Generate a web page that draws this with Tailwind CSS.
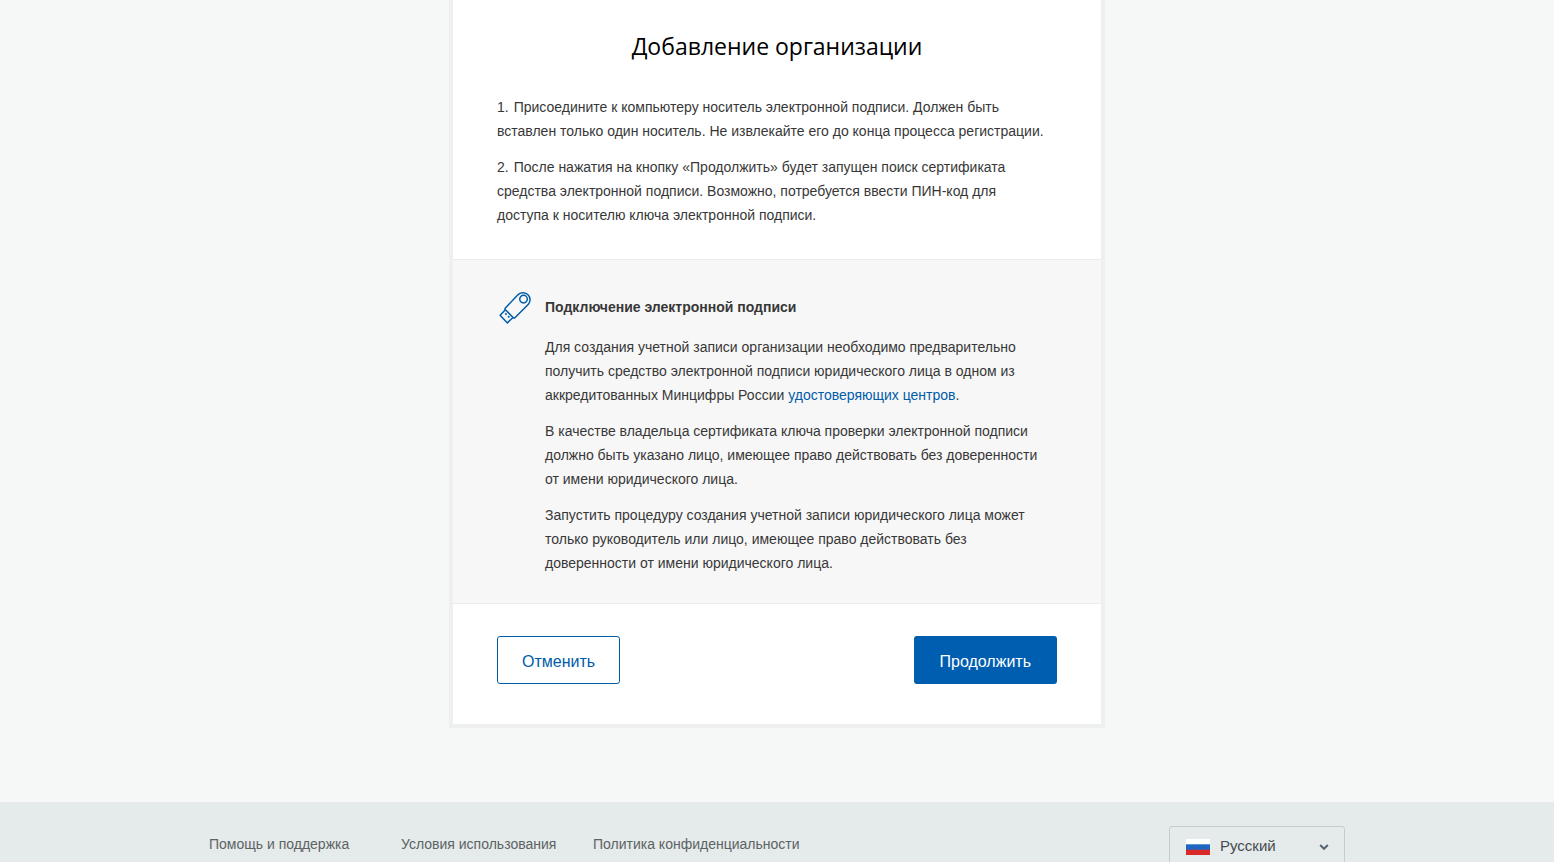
<!DOCTYPE html>
<html lang="ru">
<head>
    <meta charset="UTF-8">
    <meta name="viewport" content="width=device-width, initial-scale=1.0">
    <title>Добавление организации</title>
    <script src="https://cdn.jsdelivr.net/npm/@tailwindcss/browser@4"></script>
</head>
<body class="bg-[#f6f8f8] font-['Liberation_Sans',Arial,sans-serif] text-sm leading-6 text-[#373737]">
    <div class="flex h-screen flex-col overflow-hidden">
        <main class="mx-auto w-full max-w-[656px] shrink-0 border-4 border-t-0 border-[#eeefef] bg-white">
            <section class="px-11 pt-[26px] pb-8">
                <h1 class="mb-[29px] text-center font-['Open_Sans',sans-serif] text-[23px] leading-10 font-medium text-black">Добавление организации</h1>
                <div class="space-y-3">
                    <p><span class="mr-[5px]">1.</span>Присоедините к компьютеру носитель электронной подписи. Должен быть<br>
                        вставлен только один носитель. Не извлекайте его до конца процесса регистрации.</p>
                    <p><span class="mr-[5px]">2.</span>После нажатия на кнопку «Продолжить» будет запущен поиск сертификата<br>
                        средства электронной подписи. Возможно, потребуется ввести ПИН-код для<br>
                        доступа к носителю ключа электронной подписи.</p>
                </div>
            </section>

            <section class="flex border-y border-[#ebebeb] bg-[#f7f7f7] px-11 pt-7 pb-7">
                <svg class="mt-0.5 mr-3 h-9 w-9 shrink-0" viewBox="0 0 36 36" fill="none" stroke="#005ca9" stroke-width="1.5" stroke-linejoin="round" aria-hidden="true">
                    <path d="M8.4 18 21.4 4.3A7.1 7.1 0 0 1 31.4 14.3L17.9 27.7Q17.1 28.4 16.3 27.7L8.4 19.8Q7.6 18.9 8.4 18Z"/>
                    <circle cx="26.5" cy="9.1" r="3.8"/>
                    <path d="M8.4 19.8 3.1 25.3 10.4 32.9 16 27.5"/>
                    <path d="M8.3 23.4 9.6 24.7M11.1 26.2 12.4 27.5" stroke-width="1.7"/>
                </svg>
                <div class="space-y-3">
                    <h2 class="mt-[7px] mb-4 font-bold">Подключение электронной подписи</h2>
                    <p>Для создания учетной записи организации необходимо предварительно<br>
                        получить средство электронной подписи юридического лица в одном из<br>
                        аккредитованных Минцифры России <a href="#" class="text-[#005ca9]">удостоверяющих центров</a>.</p>
                    <p>В качестве владельца сертификата ключа проверки электронной подписи<br>
                        должно быть указано лицо, имеющее право действовать без доверенности<br>
                        от имени юридического лица.</p>
                    <p>Запустить процедуру создания учетной записи юридического лица может<br>
                        только руководитель или лицо, имеющее право действовать без<br>
                        доверенности от имени юридического лица.</p>
                </div>
            </section>

            <div class="flex items-center justify-between px-11 pt-8 pb-10 text-base">
                <button type="button" class="h-12 rounded-[3px] border border-[#005ca9] px-6 pt-1 text-[#005ca9]">Отменить</button>
                <button type="button" class="h-12 rounded-[3px] bg-[#005eb1] px-[26px] pt-1 text-white">Продолжить</button>
            </div>
        </main>

        <footer class="mt-[74px] shrink-0 bg-[#e5eaea] px-8 py-6">
            <div class="mx-auto flex w-full max-w-[1136px] items-center justify-between">
                <nav class="flex gap-8 pb-1 text-[#5c6365]">
                    <a href="#" class="min-w-40">Помощь и поддержка</a>
                    <a href="#" class="min-w-40">Условия использования</a>
                    <a href="#">Политика конфиденциальности</a>
                </nav>
                <div class="relative w-44">
                    <select aria-label="Язык" class="h-10 w-full appearance-none rounded-[3px] border border-[#c5cccf] bg-transparent pl-[50px] text-[15px] text-[#454c50]">
                        <option>Русский</option>
                        <option>English</option>
                    </select>
                    <svg class="pointer-events-none absolute top-[13px] left-[17px] h-4 w-6" viewBox="0 0 24 16" aria-hidden="true">
                        <path fill="#fff" d="M0 0h24v6H0z"/>
                        <path fill="#1f66c1" d="M0 5.3h24v6H0z"/>
                        <path fill="#d82a28" d="M0 10.7h24V16H0z"/>
                    </svg>
                    <svg class="pointer-events-none absolute top-4 right-4 h-2.5 w-2.5" viewBox="0 0 10 10" fill="none" stroke="#566570" stroke-width="2" aria-hidden="true">
                        <path d="M1.2 3 5 6.8 8.8 3"/>
                    </svg>
                </div>
            </div>
        </footer>
    </div>
</body>
</html>
